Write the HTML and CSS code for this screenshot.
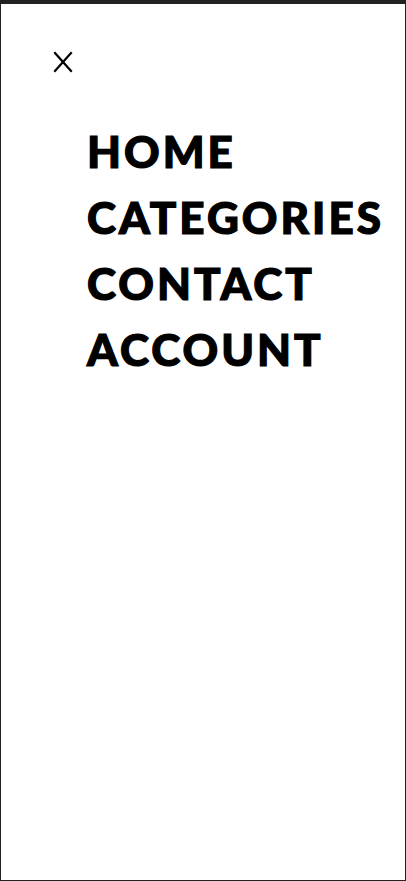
FILE: index.html
```html
<!DOCTYPE html>
<html lang="en">
<head>
<meta charset="utf-8">
<title>Menu</title>
<link rel="stylesheet" href="styles.css">
</head>
<body>
<div class="frame">
  <button class="close" aria-label="Close menu">
    <svg width="20" height="22" viewBox="0 0 20 22" fill="none" stroke="#000" stroke-width="2.2" stroke-linecap="square">
      <line x1="2" y1="2" x2="18" y2="20"/>
      <line x1="18" y1="2" x2="2" y2="20"/>
    </svg>
  </button>
  <nav class="menu">
    <a class="menu-item" href="#">HOME</a>
    <a class="menu-item" href="#">CATEGORIES</a>
    <a class="menu-item" href="#">CONTACT</a>
    <a class="menu-item" href="#">ACCOUNT</a>
  </nav>
</div>
</body>
</html>
```
FILE: styles.css
```css
html, body {
  margin: 0;
  padding: 0;
  background: #fff;
}
.frame {
  box-sizing: border-box;
  width: 406px;
  height: 881px;
  border-top: 4px solid #222;
  border-left: 1px solid #222;
  border-right: 1px solid #222;
  border-bottom: 1px solid #222;
  background: #fff;
  display: flex;
  flex-direction: column;
}
.close {
  align-self: flex-start;
  margin: 47px 0 0 52px;
  padding: 0;
  border: 0;
  background: none;
  width: 20px;
  height: 22px;
  display: flex;
}
.menu {
  display: flex;
  flex-direction: column;
  padding-left: 86px;
  margin-top: 45px;
}
.menu-item {
  font-family: Lato, "Liberation Sans", sans-serif;
  font-weight: 900;
  font-size: 44px;
  line-height: 66px;
  letter-spacing: 3px;
  -webkit-text-stroke: 1.2px #000;
  color: #000;
  text-decoration: none;
  white-space: nowrap;
}
```
